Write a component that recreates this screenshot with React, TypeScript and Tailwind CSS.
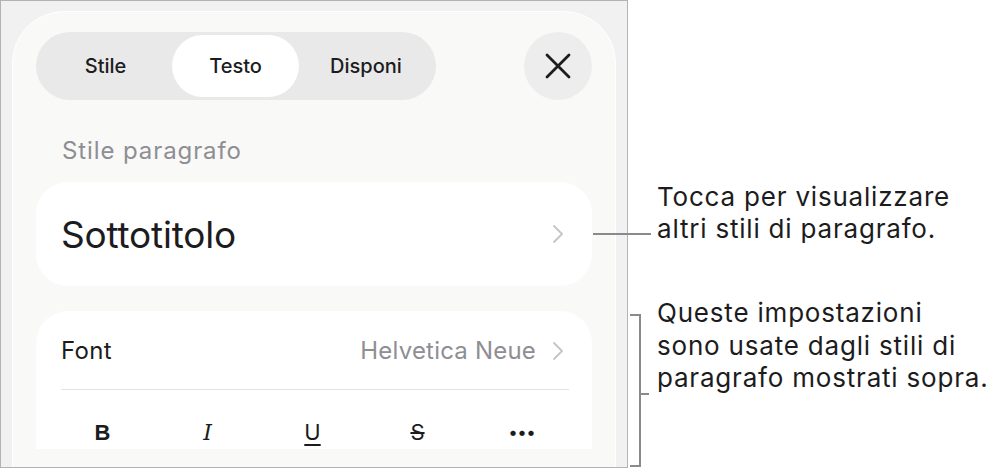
import React from 'react';

const Chevron = ({ className = '' }: { className?: string }) => (
  <svg width="12" height="20" viewBox="0 0 12 20" className={className} fill="none">
    <path d="M2 2 L10 10 L2 18" stroke="#c5c5c7" strokeWidth="1.8" strokeLinecap="round" strokeLinejoin="round" />
  </svg>
);

const CloseIcon = () => (
  <svg width="26" height="26" viewBox="0 0 26 26" fill="none">
    <path d="M2 2 L24 24 M24 2 L2 24" stroke="#1c1c1e" strokeWidth="2.8" strokeLinecap="round" />
  </svg>
);

export default function App() {
  const tabs = ['Stile', 'Testo', 'Disponi'];

  return (
    <div className="relative w-[1000px] h-[471px] bg-white overflow-hidden font-['Inter','Liberation_Sans',sans-serif] text-[#1c1c1e]">
      {/* screenshot frame */}
      <div className="w-[628px] h-[468px] border border-[#b3b3b3] bg-[#f1f1f1] overflow-hidden pt-[10px] pl-[11px] pr-[11px]">
        <div className="h-[520px] rounded-t-[52px] bg-[#f9f9f8] border border-white px-[23px] pt-[20px]">
          {/* header */}
          <div className="flex items-center justify-between">
            <div className="w-[400px] h-[68px] rounded-full bg-[#e9e9e9] p-[3px] grid grid-cols-[133px_127px_134px]">
              {tabs.map((t) => (
                <div
                  key={t}
                  className={
                    t === 'Testo'
                      ? 'flex items-center justify-center rounded-full bg-white text-[20px] font-medium'
                      : 'flex items-center justify-center rounded-full text-[20px] font-medium'
                  }
                >
                  {t}
                </div>
              ))}
            </div>
            <div className="w-[68px] h-[68px] rounded-full bg-[#ededed] flex items-center justify-center">
              <CloseIcon />
            </div>
          </div>

          {/* section label */}
          <div className="mt-[36px] pl-[26px] text-[24px] leading-[30px] tracking-[0.9px] text-[#8e8e93]">Stile paragrafo</div>

          {/* paragraph style card */}
          <div className="mt-[16px] h-[104px] rounded-[32px] bg-white flex items-center justify-between pl-[25px] pr-[28px]">
            <span className="text-[37px] leading-none tracking-[-0.2px]">Sottotitolo</span>
            <Chevron />
          </div>

          {/* font card */}
          <div className="mt-[25px] rounded-t-[32px] bg-white pl-[25px] pr-[23px] pt-[24px]">
            <div className="flex items-center justify-between h-[32px] pr-[5px]">
              <span className="text-[24px] tracking-[0.3px]">Font</span>
              <div className="flex items-center gap-[16px]">
                <span className="text-[24px] tracking-[0.2px] text-[#8e8e93]">Helvetica Neue</span>
                <Chevron />
              </div>
            </div>
            <div className="mt-[22px] h-px bg-[#e3e3e5]" />
            <div className="mt-[26px] -ml-[11px] w-[525px] grid grid-cols-5 justify-items-center items-center text-[22px]">
              <span className="font-bold font-['Liberation_Sans',sans-serif] text-[22px]">B</span>
              <span className="italic font-['DejaVu_Serif',serif] text-[22px]">I</span>
              <span className="underline underline-offset-[4px] decoration-[1.5px]">U</span>
              <span className="line-through decoration-[1.5px]">S</span>
              <span className="font-bold tracking-[1px] text-[17px]">•••</span>
            </div>
          </div>
        </div>
      </div>

      {/* callout 1 */}
      <div className="absolute left-[593px] top-[233px] w-[58px] h-[2px] bg-[#8a8a8a]" />
      <div className="absolute left-[657px] top-[181px] text-[26px] leading-[32px] tracking-[0.8px] text-[#1c1c1e]">
        <div>Tocca per visualizzare</div>
        <div>altri stili di paragrafo.</div>
      </div>

      {/* callout 2 bracket */}
      <div className="absolute left-[630px] top-[314px] w-[11px] h-[153px] border-t-2 border-r-2 border-b-2 border-[#8a8a8a]" />
      <div className="absolute left-[641px] top-[393px] w-[8px] h-[2px] bg-[#8a8a8a]" />
      <div className="absolute left-[657px] top-[297px] text-[26px] leading-[32.5px] tracking-[0.8px] text-[#1c1c1e]">
        <div>Queste impostazioni</div>
        <div>sono usate dagli stili di</div>
        <div>paragrafo mostrati sopra.</div>
      </div>
    </div>
  );
}
